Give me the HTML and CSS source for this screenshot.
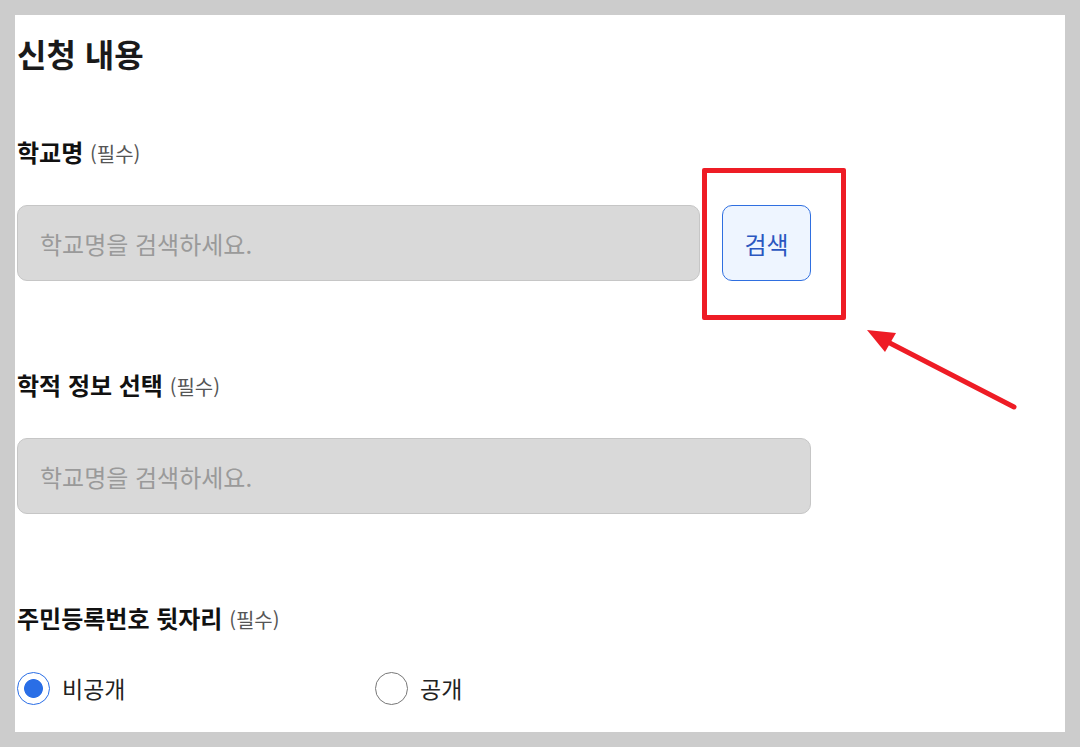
FILE: index.html
```html
<!DOCTYPE html>
<html lang="ko">
<head>
    <meta charset="UTF-8">
    <meta name="viewport" content="width=device-width, initial-scale=1.0">
    <title>신청 내용</title>
    <link rel="stylesheet" href="styles.css">
</head>
<body>
    <div class="panel">
        <h2 class="title">신청 내용</h2>

        <div class="field">
            <label class="label">학교명 <span class="req">(필수)</span></label>
            <div class="search-row">
                <input type="text" class="box" placeholder="학교명을 검색하세요." readonly>
                <button class="search-btn">검색</button>
            </div>
        </div>

        <div class="field">
            <label class="label">학적 정보 선택 <span class="req">(필수)</span></label>
            <div class="search-row">
                <input type="text" class="box" placeholder="학교명을 검색하세요." readonly>
            </div>
        </div>

        <div class="field">
            <label class="label">주민등록번호 뒷자리 <span class="req">(필수)</span></label>
            <div class="radios">
                <label class="option"><input type="radio" name="open" checked> 비공개</label>
                <label class="option"><input type="radio" name="open"> 공개</label>
            </div>
        </div>

        <!-- annotation -->
        <div class="mark"></div>
        <svg class="arrow" width="175" height="110" viewBox="0 0 175 110">
            <line x1="22" y1="19" x2="154" y2="87" stroke="#ee1c25" stroke-width="5" stroke-linecap="round"/>
            <polygon points="7,10 36,13 25,32" fill="#ee1c25"/>
        </svg>
    </div>
</body>
</html>
```

FILE: styles.css
```css
body {
    margin: 0;
    background: #cccccc;
    padding: 15px;
    font-family: "Noto Sans CJK KR", "Noto Sans", sans-serif;
    color: #1a1a1a;
}
.panel {
    position: relative;
    background: #ffffff;
    height: 717px;
    padding: 0 2px;
    box-sizing: border-box;
}
.title {
    margin: 0;
    padding-top: 18px;
    font-size: 32px;
    line-height: 40px;
    font-weight: 700;
}
.field {
    margin-top: 65px;
}
.field + .field {
    margin-top: 90px;
}
.label {
    display: block;
    font-size: 24px;
    line-height: 28px;
    font-weight: 700;
    color: #111;
    margin-bottom: 37px;
}
.req {
    font-size: 20px;
    font-weight: 400;
    color: #555;
}
.search-row {
    display: flex;
    gap: 22px;
    width: 794px;
}
.box {
    flex: 1;
    height: 76px;
    box-sizing: border-box;
    margin: 0;
    padding: 0 22px;
    background: #d9d9d9;
    border: 1px solid #c6c6c6;
    border-radius: 10px;
    font-family: inherit;
    font-size: 24px;
    outline: none;
}
.box::placeholder {
    color: #9a9a9a;
}
.search-btn {
    width: 89px;
    height: 76px;
    margin: 0;
    background: #eef5ff;
    border: 1px solid #2f6fe0;
    border-radius: 10px;
    color: #2b57c0;
    font-family: inherit;
    font-size: 24px;
    cursor: pointer;
}
.radios {
    display: flex;
}
.option {
    width: 358px;
    display: flex;
    align-items: center;
    gap: 12px;
    font-size: 23px;
    color: #222;
}
.option input {
    appearance: none;
    margin: 0;
    width: 33px;
    height: 33px;
    border-radius: 50%;
    border: 1px solid #777;
    background: #fff;
}
.option input:checked {
    border: 1.5px solid #2a6ee6;
    background: radial-gradient(circle, #2a6ee6 0 9px, #fff 9.8px);
}
.mark {
    position: absolute;
    left: 687px;
    top: 153px;
    width: 144px;
    height: 152px;
    box-sizing: border-box;
    border: 5px solid #ee1c25;
    border-radius: 2px;
}
.arrow {
    position: absolute;
    left: 845px;
    top: 305px;
}
```
